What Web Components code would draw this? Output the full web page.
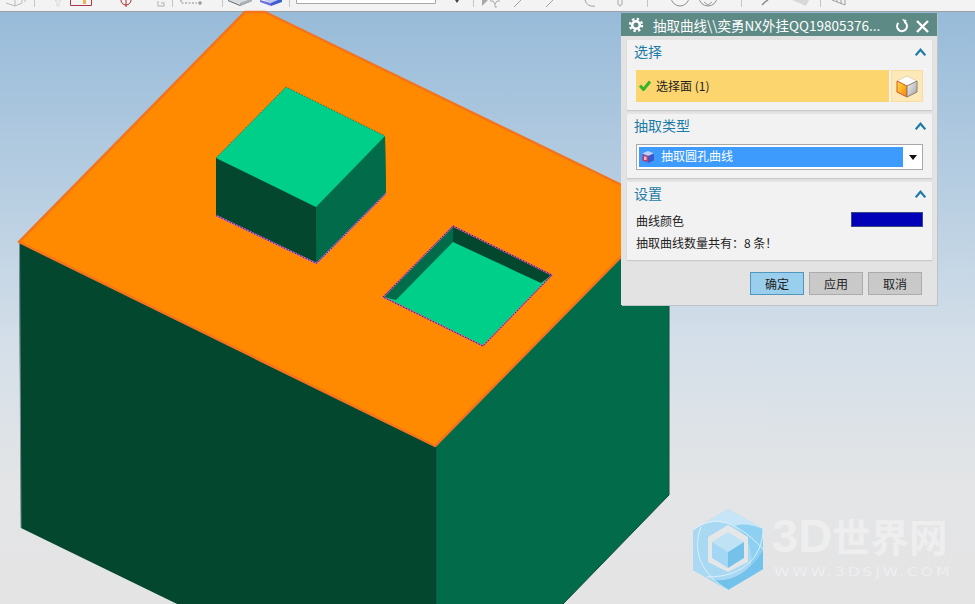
<!DOCTYPE html>
<html lang="zh">
<head>
<meta charset="utf-8">
<title>抽取曲线</title>
<style>
  html, body { margin: 0; height: 100%; overflow: hidden; }
  body { font-family: "Noto Sans CJK SC", "Liberation Sans", sans-serif; }
</style>
</head>
<body>

<template id="nx-app-template">
  <style>
    :host { display: flex; flex-direction: column; width: 975px; height: 604px; overflow: hidden; }
  </style>
  <slot></slot>
</template>

<template id="nx-toolbar-template">
  <style>
    :host { display: block; flex: none; height: 11px; background: #f3f3f3; border-bottom: 1px solid #9c9fa3; overflow: hidden; }
    svg { display: block; }
  </style>
  <svg width="975" height="11" viewBox="0 0 975 11" fill="none">
    <!-- separators -->
    <g stroke="#c4c4c4">
      <path d="M34.5 0v7M172.5 0v7M222.5 0v7M289.5 0v7M473.5 0v7M647.5 0v7M741.5 0v7M820.5 0v7"/>
    </g>
    <!-- everything below is cut off by the top of the window -->
    <path d="M6 3l9 3 7-3v-3M15 6v-6" stroke="#b9b9b9"/>
    <path d="M24 1h2" stroke="#bbb"/>
    <path d="M55 0h6l-2 3v3h-2v-3z" stroke="#d8d8d8"/>
    <path d="M70.5 0v5.5h21v-5.5" stroke="#a83848"/>
    <rect x="83" y="0" width="3" height="4" fill="#e6b75a"/>
    <path d="M121 0a5 5 0 0 0 10 0M126 0v7" stroke="#a82c34"/>
    <path d="M158 1v5h6v-3h-3" stroke="#c6c6c6" stroke-width="1.5"/>
    <path d="M181 0v3h16" stroke="#8a8a8a" stroke-dasharray="2 1.5"/>
    <circle cx="200" cy="3" r="1.8" fill="#9a9a9a"/>
    <path d="M228 0l12 5 12-5z" fill="#d9dcdf"/>
    <path d="M228 0v1l12 5v-1zM252 0v1l-12 5v-1z" fill="#5f676c"/>
    <path d="M240 3v3l12-5v-1h-4z" fill="#a9b0b4"/>
    <path d="M260 0v2l11 4v-3z" fill="#6f6fe0"/>
    <path d="M271 6l11-4v-2h-11z" fill="#3f5fd0"/>
    <path d="M264 0l7 3 7-3z" fill="#b8c8ee"/>
    <path d="M296.5 0v3.5h139v-3.5" stroke="#a9a9a9" fill="#fff"/>
    <path d="M455 0h4l-2 3z" fill="#444"/>
    <path d="M482 0v6l6-6z" fill="#a9a9a9"/>
    <path d="M490 1h3l2 3 2-3h3M495 4v3h2" stroke="#a8a8a8"/>
    <path d="M514 7l7-7M546 7l7-7" stroke="#a2a2a2"/>
    <path d="M585 0a8 8 0 0 0 10 6" stroke="#a2a2a2"/>
    <path d="M618 0v4l2 2 2-2v-4" stroke="#c0c0c0" stroke-width="1.5"/>
    <circle cx="680" cy="-3" r="9" stroke="#8e8e8e"/>
    <circle cx="708" cy="-3" r="9" stroke="#8e8e8e"/>
    <path d="M704 2l4 3 4-3" stroke="#9a9a9a"/>
    <path d="M762 5l3-3 3-2" stroke="#8a8a8a" stroke-width="1.5"/>
    <path d="M792 0l14 6 3-6z" fill="#d8d8d8"/>
    <path d="M832 0l13 5v-5M837 0v2M841 0v4" stroke="#a0a0a0"/>
  </svg>
</template>

<template id="nx-scene-template">
  <style>
    :host {
      display: block; position: relative; flex: 1; min-height: 0;
      background: linear-gradient(#98bbd9 0, #b9cfe2 190px, #d4dfe9 330px, #e4e5e6 480px, #e4e4e5 100%);
    }
    svg.model { position: absolute; left: 0; top: -12px; }
  </style>
  <!-- coordinates are window coordinates, hence the -12px -->
  <svg class="model" width="975" height="616" viewBox="0 0 975 616">
    <polygon points="19,242 21,528 436,730 436,446" fill="#03472f"/>
    <polygon points="435,446 669,208 669,495 436,735" fill="#026c4a"/>
    <path d="M19.500 242L21 528" stroke="#7c8f94" stroke-width="1"/>
    <path d="M435.500 446V616" stroke="#0c3f2d" stroke-width="1.500"/>
    <path d="M669 208V495L563 604" fill="none" stroke="#154c3b" stroke-width="1"/>
    <polygon points="19,242 245,12 265,12 669,208 435,446" fill="#ff8a00" stroke="#f2741c" stroke-width="2.500" stroke-linejoin="round"/>

    <!-- raised block -->
    <polygon points="216,215 316.500,263 386,193 385,136 216,158" fill="#026c4a"/>
    <polygon points="216,158 316,207 316.500,263 216,215" fill="#03472f"/>
    <polygon points="316,207 385,136 386,193 316.500,263" fill="#026c4a"/>
    <polygon points="286,87 385,136 316,207 216,158" fill="#00cf89"/>
    <path d="M216 215.500L316.500 263.500L386 193.500" fill="none" stroke="#d46cb0" stroke-width="1.500"/>
    <path d="M216 215.500L316.500 263.500L386 193.500" fill="none" stroke="#3a1c8c" stroke-width="1" stroke-dasharray="1.500 1.500"/>
    <path d="M216 158L286 87L385 136" fill="none" stroke="#3f6c50" stroke-width="1" stroke-dasharray="1.500 1.500"/>

    <!-- pocket -->
    <polygon points="453,226 552,275 483,346 383,297" fill="#00cf89"/>
    <polygon points="453,226 552,275 541,283 453,242" fill="#03472f"/>
    <polygon points="453,226 453,242 396,300 383,297" fill="#026c4a"/>
    <polygon points="453,226 552,275 483,346 383,297" fill="none" stroke="#e0668a" stroke-width="1.600"/>
    <polygon points="453,226 552,275 483,346 383,297" fill="none" stroke="#301468" stroke-width="1" stroke-dasharray="1.500 1.500"/>
  </svg>
  <slot></slot>
</template>

<template id="nx-dialog-template">
  <style>
    :host {
      display: flex; flex-direction: column; position: absolute; left: 621px; top: 1px;
      width: 316px; height: 292px; box-sizing: border-box;
      background: #e3e3e3; box-shadow: 1px 1px 0 #bcc3c9;
      font-size: 12px; color: #222;
    }
    .title {
      flex: none; display: flex; align-items: center; height: 23px;
      background: #5d8a85; color: #fff; font-size: 13.500px; white-space: nowrap;
    }
    .gear { margin: 0 9px 0 7px; }
    .text { flex: 1; overflow: hidden; }
    .refresh { margin: 3px 7px 0 0; }
    .close { margin: 3px 8px 0 0; }
    svg { flex: none; display: block; }
    .body { flex: 1; display: flex; flex-direction: column; gap: 4px; padding: 4px 5px 0 6px; }
  </style>
  <div class="title">
    <svg class="gear" width="16" height="16" viewBox="0 0 16 16" fill="none" stroke="#fff">
      <circle cx="8" cy="8" r="3.800" stroke-width="2.600"/>
      <circle cx="8" cy="8" r="6" stroke-width="2.400" stroke-dasharray="2.360 2.350"/>
    </svg>
    <span class="text"><slot name="title"></slot></span>
    <svg class="refresh" width="14" height="14" viewBox="0 0 14 14" fill="none">
      <path d="M9.500 2.800A5 5 0 1 1 3.300 3.800" stroke="#fff" stroke-width="2"/>
      <path d="M6.500 0.500h4.500v4.500z" fill="#fff" transform="rotate(12 9 3)"/>
    </svg>
    <svg class="close" width="13" height="13" viewBox="0 0 13 13" fill="none" stroke="#fff" stroke-width="2.400">
      <path d="M1 1l11 11M12 1L1 12"/>
    </svg>
  </div>
  <div class="body"><slot></slot></div>
</template>

<template id="nx-section-template">
  <style>
    :host {
      display: block; background: #f2f2f2; box-shadow: 0 1px 1px #c9c9c9;
      padding: 0 9px 8px;
    }
    header {
      display: flex; align-items: center; justify-content: space-between; height: 30px;
      padding-bottom: 8px; box-sizing: border-box;
      margin-left: -2px; color: #1d7ba8; font-size: 14px;
    }
    svg { display: block; margin: 2px -3px 0 0; }
  </style>
  <header>
    <slot name="title"></slot>
    <svg width="11" height="8" viewBox="0 0 11 8" fill="none" stroke="#1d7ba8" stroke-width="2.200">
      <path d="M0.700 7.300L5.500 1.700L10.300 7.300"/>
    </svg>
  </header>
  <slot></slot>
</template>

<template id="nx-selection-template">
  <style>
    :host { display: flex; gap: 2px; height: 32px; }
    .bar {
      flex: 1; display: flex; align-items: center; gap: 5px; padding: 0 0 2px 3px; box-sizing: border-box;
      background: #fdd56f; color: #222;
    }
    .pick {
      flex: none; width: 32px; box-sizing: border-box; display: flex; align-items: center; justify-content: center;
      background: #fde9b8; border: 1px solid #f8dca0;
    }
    svg { display: block; }
  </style>
  <div class="bar">
    <svg width="12" height="11" viewBox="0 0 12 11" fill="none">
      <path d="M1 5.500L4.500 9.500L11 1.500" stroke="#35b52a" stroke-width="3"/>
    </svg>
    <span><slot></slot></span>
  </div>
  <div class="pick">
    <svg width="22" height="23" viewBox="0 0 22 23">
      <defs>
        <linearGradient id="cube-left" x1="0" y1="0" x2="1" y2="1">
          <stop offset="0" stop-color="#ffe23c"/>
          <stop offset="1" stop-color="#f5820f"/>
        </linearGradient>
        <linearGradient id="cube-right" x1="0" y1="0" x2="1" y2="1">
          <stop offset="0" stop-color="#f4f4f4"/>
          <stop offset="1" stop-color="#a2a2a2"/>
        </linearGradient>
      </defs>
      <polygon points="11,1 21,6 11,11 1,6" fill="#fff" stroke="#d9c6a8" stroke-width="0.800"/>
      <polygon points="1,6 11,11 11,22 1,17" fill="url(#cube-left)" stroke="#d9572a" stroke-width="1"/>
      <polygon points="11,11 21,6 21,17 11,22" fill="url(#cube-right)" stroke="#8e7f72" stroke-width="1"/>
    </svg>
  </div>
</template>

<template id="nx-combo-template">
  <style>
    :host {
      display: flex; align-items: stretch; height: 26px; box-sizing: border-box;
      background: #fff; border: 1px solid #a8a8a8; padding: 2px 0 2px 2px;
    }
    .value {
      flex: 1; display: flex; align-items: center; gap: 6px; padding-left: 2px;
      background: #3d9bfd; color: #fff;
    }
    .value span { margin-top: -4px; }
    .arrow { flex: none; width: 19px; display: flex; align-items: center; justify-content: center; }
    svg { display: block; }
  </style>
  <div class="value">
    <svg width="14" height="14" viewBox="0 0 14 14">
      <polygon points="7,1 13,3.500 7,6 1,3.500" fill="#c3cff2"/>
      <polygon points="1,3.500 7,6 7,13 1,10.500" fill="#5a6ad0"/>
      <polygon points="7,6 13,3.500 13,10.500 7,13" fill="#3f58c8"/>
      <rect x="2.500" y="6" width="3.500" height="4.500" fill="#f3b9c4" stroke="#d8304e" stroke-width="1"/>
    </svg>
    <span><slot></slot></span>
  </div>
  <div class="arrow">
    <svg width="8" height="5" viewBox="0 0 8 5"><path d="M0 0h8L4 5z" fill="#111"/></svg>
  </div>
</template>

<template id="nx-swatch-row-template">
  <style>
    :host { display: flex; justify-content: space-between; align-items: flex-start; height: 22px; }
    span { line-height: 18px; }
    i { display: block; width: 72px; height: 15px; box-sizing: border-box; background: var(--swatch, #0000b8); border: 1px solid #3a4a7a; }
  </style>
  <span><slot></slot></span>
  <i></i>
</template>

<template id="nx-footer-template">
  <style>
    :host { display: flex; justify-content: flex-end; gap: 5px; padding: 8px 10px 0 0; }
  </style>
  <slot></slot>
</template>

<template id="nx-button-template">
  <style>
    :host {
      display: flex; align-items: center; justify-content: center;
      width: 54px; height: 23px; box-sizing: border-box;
      background: #c9c9c9; border: 1px solid #ababab; font-size: 12px; color: #222;
    }
    :host([default]) { background: #99cfec; border-color: #4f97bd; }
  </style>
  <slot></slot>
</template>

<template id="nx-watermark-template">
  <style>
    :host {
      display: block; position: absolute; left: 693px; top: 497px; width: 260px; height: 82px;
      color: #eeeeef; font-family: "Liberation Sans", "Noto Sans CJK SC", sans-serif;
    }
    svg { position: absolute; left: 0; top: 0; }
    .name {
      position: absolute; left: 79px; top: 2px; font-size: 38.500px; line-height: 50px; font-weight: 700; white-space: nowrap;
    }
    .url {
      position: absolute; left: 81px; top: 56px; font-size: 12px; line-height: 14px; letter-spacing: 2.200px; white-space: nowrap;
      font-family: "DejaVu Sans", sans-serif; transform: scaleX(1.3); transform-origin: left center;
    }
  </style>
  <svg width="72" height="82" viewBox="0 0 72 82">
    <polygon points="35,0 70,20 70,60 35,81 0,61 0,21" fill="#a9d8f2"/>
    <path d="M35 0L70 20V44C66 30 55 20 35 14C24 11 12 13 0 21z" fill="#c6e5f6"/>
    <path d="M70 20V60L52 71C62 56 62 34 42 17C50 14 60 16 70 20z" fill="#8dd0f2"/>
    <path d="M70 42V60L35 81L14 69C34 76 54 66 70 42z" fill="#72c2eb"/>
    <path d="M35 81L0 61V21C0 40 4 62 35 81z" fill="#abd9f3"/>
    <path d="M0 21C16 8 38 6 70 40M70 20C70 44 54 68 14 68M35 81C10 66 -2 44 8 18" fill="none" stroke="#e9f5fb" stroke-width="0.800"/>
    <polygon points="35,16 55,28 55,53 35,63 15,53 15,28" fill="#e5e6e7"/>
    <polygon points="35,23 51,33 35,43 19,33" fill="#bfe2f5"/>
    <polygon points="19,33 35,43 35,59 19,49" fill="#a3d7f3"/>
    <polygon points="35,43 51,33 51,49 35,59" fill="#74c2ea"/>
  </svg>
  <div class="name"><slot name="name"></slot></div>
  <div class="url"><slot name="url"></slot></div>
</template>

<nx-app>
  <nx-toolbar></nx-toolbar>
  <nx-scene>
    <nx-dialog>
      <span slot="title">抽取曲线\\奕勇NX外挂QQ19805376...</span>
      <nx-section>
        <span slot="title">选择</span>
        <nx-selection>选择面 (1)</nx-selection>
      </nx-section>
      <nx-section>
        <span slot="title">抽取类型</span>
        <nx-combo>抽取圆孔曲线</nx-combo>
      </nx-section>
      <nx-section>
        <span slot="title">设置</span>
        <nx-swatch-row>曲线颜色</nx-swatch-row>
        <div style="line-height:18px;height:18px">抽取曲线数量共有：8 条！</div>
      </nx-section>
      <nx-footer>
        <nx-button default>确定</nx-button>
        <nx-button>应用</nx-button>
        <nx-button>取消</nx-button>
      </nx-footer>
    </nx-dialog>
    <nx-watermark>
      <span slot="name"><b style="font-size:47px">3D</b>世界网</span>
      <span slot="url">WWW.3DSJW.COM</span>
    </nx-watermark>
  </nx-scene>
</nx-app>

<script>
  const register = (tagName) => {
    const template = document.getElementById(`${tagName}-template`);
    customElements.define(tagName, class extends HTMLElement {
      constructor() {
        super();
        this.attachShadow({mode: 'open'});
        this.shadowRoot.appendChild(template.content.cloneNode(true));
      }
    });
  };

  ['nx-app', 'nx-toolbar', 'nx-scene', 'nx-dialog', 'nx-section', 'nx-selection',
   'nx-combo', 'nx-swatch-row', 'nx-footer', 'nx-button', 'nx-watermark'].forEach(register);
</script>
</body>
</html>
